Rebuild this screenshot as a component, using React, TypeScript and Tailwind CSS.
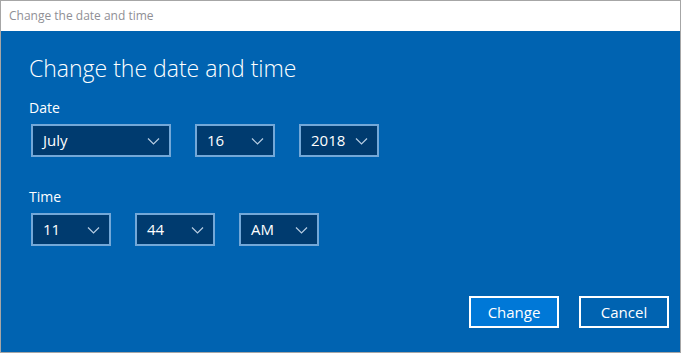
const font = { fontFamily: '"Open Sans", "Noto Sans", sans-serif' };

function Select({ value, width }: { value: string; width: string }) {
  return (
    <div
      className={`${width} h-[33px] flex items-center justify-between border-2 border-[#73a8d8] bg-[#003b6f] pl-[10px] pr-[9px] text-white text-[15px]`}
    >
      <span>{value}</span>
      <svg width="13" height="8" viewBox="0 0 13 8" className="text-[#b7cde2]">
        <path d="M1 1.5l5.5 5.5 5.5-5.5" fill="none" stroke="currentColor" strokeWidth="1.2" />
      </svg>
    </div>
  );
}

export default function App() {
  return (
    <div className="relative w-[682px] h-[354px] bg-white overflow-hidden" style={font}>
      {/* settings page behind the dialog */}
      <div className="absolute left-[255px] -top-[26px] text-[28px] text-black font-light">Date &amp; time</div>
      <div className="absolute left-[258px] top-[349px] text-[13px] text-[#222]">Time zone</div>

      <div className="absolute inset-0 right-[1px] bottom-[1px] border border-[#a6a6a6] flex flex-col">
        <div className="h-[30px] bg-white flex items-center pl-[8px] text-[12px] text-[#8f8f95]">
          Change the date and time
        </div>
        <div className="flex-1 bg-[#0063b1] text-white flex flex-col pl-[28px] pr-[11px]">
          <h1 className="mt-[21px] text-[23px] leading-[32px] font-light">Change the date and time</h1>

          <div className="mt-[14px] text-[14px] leading-[20px]">Date</div>
          <div className="mt-[6px] ml-[2px] flex gap-[24px]">
            <Select value="July" width="w-[140px]" />
            <Select value="16" width="w-[80px]" />
            <Select value="2018" width="w-[80px]" />
          </div>

          <div className="mt-[30px] text-[14px] leading-[20px]">Time</div>
          <div className="mt-[6px] ml-[2px] flex gap-[24px]">
            <Select value="11" width="w-[80px]" />
            <Select value="44" width="w-[80px]" />
            <Select value="AM" width="w-[80px]" />
          </div>

          <div className="mt-auto mb-[24px] flex justify-end gap-[20px]">
            <button className="w-[90px] h-[32px] border-2 border-white bg-[#0078d7] text-[15px]">Change</button>
            <button className="w-[90px] h-[32px] border-2 border-white text-[15px]">Cancel</button>
          </div>
        </div>
      </div>
    </div>
  );
}
